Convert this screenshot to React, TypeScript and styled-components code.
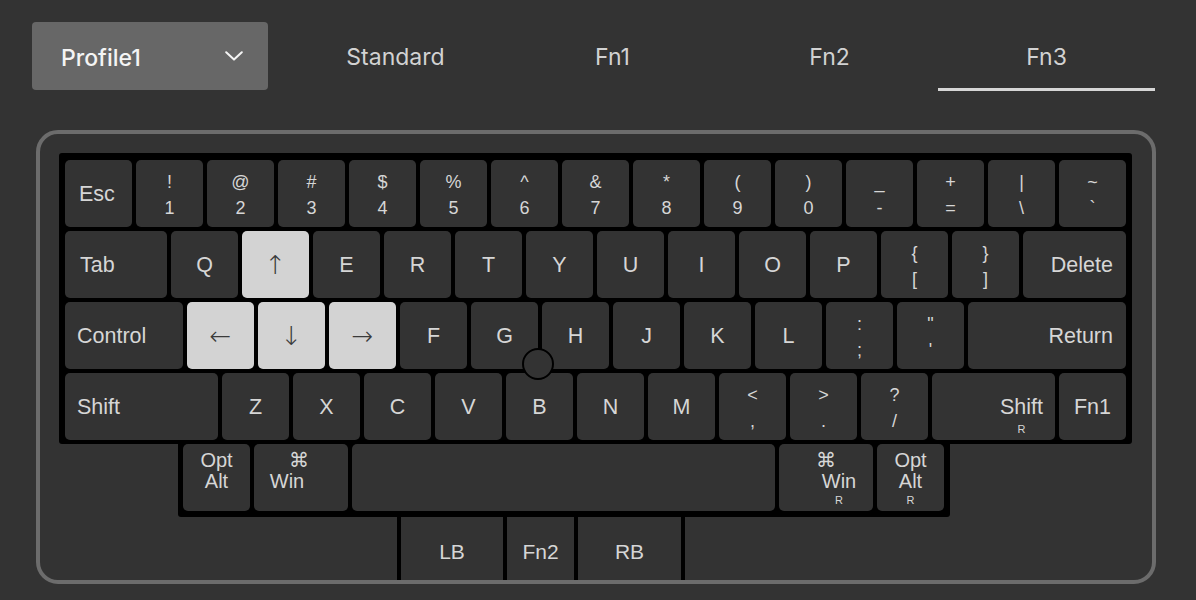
import React from 'react';
import styled, { createGlobalStyle } from 'styled-components';

type Line = { t: string; dx?: number; small?: boolean };

type KeyDef = {
  w?: number;
  label?: string;
  pair?: [string, string];
  lines?: Line[];
  sub?: string;
  align?: 'left' | 'center' | 'right';
  pad?: number;
  hl?: boolean;
};

const pair = (a: string, b: string): KeyDef => ({ pair: [a, b] });
const letters = (s: string): KeyDef[] => s.split('').map((c) => ({ label: c }));

const rows: KeyDef[][] = [
  [
    { label: 'Esc', align: 'left', pad: 14 },
    pair('!', '1'),
    pair('@', '2'),
    pair('#', '3'),
    pair('$', '4'),
    pair('%', '5'),
    pair('^', '6'),
    pair('&', '7'),
    pair('*', '8'),
    pair('(', '9'),
    pair(')', '0'),
    pair('_', '-'),
    pair('+', '='),
    pair('|', '\\'),
    pair('~', '`'),
  ],
  [
    { label: 'Tab', w: 102, align: 'left', pad: 15 },
    { label: 'Q' },
    { label: '↑', hl: true },
    ...letters('ERTYUIOP'),
    pair('{', '['),
    pair('}', ']'),
    { label: 'Delete', w: 103, align: 'right', pad: 13 },
  ],
  [
    { label: 'Control', w: 118, align: 'left', pad: 12 },
    { label: '←', hl: true },
    { label: '↓', hl: true },
    { label: '→', hl: true },
    ...letters('FGHJKL'),
    pair(':', ';'),
    pair('"', "'"),
    { label: 'Return', w: 158, align: 'right', pad: 13 },
  ],
  [
    { label: 'Shift', w: 153, align: 'left', pad: 12 },
    ...letters('ZXCVBNM'),
    pair('<', ','),
    pair('>', '.'),
    pair('?', '/'),
    { label: 'Shift', sub: 'R', w: 123, align: 'right', pad: 12 },
    { label: 'Fn1' },
  ],
];

const bottomRow: KeyDef[] = [
  { lines: [{ t: 'Opt' }, { t: 'Alt' }] },
  { w: 94, lines: [{ t: '⌘', dx: -2 }, { t: 'Win', dx: -14 }] },
  { w: 423 },
  { w: 94, lines: [{ t: '⌘' }, { t: 'Win', dx: 13 }, { t: 'R', dx: 13, small: true }] },
  { lines: [{ t: 'Opt' }, { t: 'Alt' }, { t: 'R', small: true }] },
];

const thumbKeys = [
  { label: 'LB', w: 102 },
  { label: 'Fn2', w: 67 },
  { label: 'RB', w: 103 },
];

const tabs = ['Standard', 'Fn1', 'Fn2', 'Fn3'];

const renderKey = (k: KeyDef, i: number) => (
  <Key
    key={i}
    $w={k.w ?? 67}
    $hl={!!k.hl}
    $align={k.align ?? 'center'}
    $pad={k.pad ?? 0}
    $top={!!k.lines}
  >
    {k.pair ? (
      <Pair>
        <span>{k.pair[0]}</span>
        <span>{k.pair[1]}</span>
      </Pair>
    ) : k.lines ? (
      <Stack>
        {k.lines.map((l, j) => (
          <StackLine key={j} $dx={l.dx ?? 0} $small={!!l.small}>
            {l.t}
          </StackLine>
        ))}
      </Stack>
    ) : k.sub ? (
      <SubWrap>
        <span>{k.label}</span>
        <Sub>{k.sub}</Sub>
      </SubWrap>
    ) : k.hl ? (
      <Arrow>{k.label}</Arrow>
    ) : (
      k.label
    )}
  </Key>
);

const App = () => {
  return (
    <Page>
      <GlobalStyle />
      <Header>
        <Dropdown>
          <span>Profile1</span>
          <svg width="18" height="10" viewBox="0 0 18 10" fill="none">
            <polyline
              points="1.2,1.2 9,8.6 16.8,1.2"
              stroke="#f4f4f4"
              strokeWidth="2"
              strokeLinecap="round"
              strokeLinejoin="round"
            />
          </svg>
        </Dropdown>
        <Tabs>
          {tabs.map((t) => (
            <Tab key={t} $active={t === 'Fn3'}>
              {t}
            </Tab>
          ))}
        </Tabs>
      </Header>

      <Frame>
        <Plate>
          <MainPlate>
            {rows.map((row, r) => (
              <KeyRow key={r}>{row.map(renderKey)}</KeyRow>
            ))}
          </MainPlate>
          <BottomPlate>
            <KeyRow>{bottomRow.map(renderKey)}</KeyRow>
          </BottomPlate>
          <ThumbRow>
            {thumbKeys.map((k) => (
              <ThumbKey key={k.label} $w={k.w}>
                {k.label}
              </ThumbKey>
            ))}
          </ThumbRow>
          <TrackPoint />
        </Plate>
      </Frame>
    </Page>
  );
};

const GlobalStyle = createGlobalStyle`
  html, body {
    margin: 0;
    padding: 0;
    background: #333333;
  }
  body {
    width: 1196px;
    height: 600px;
    overflow: hidden;
    font-family: Inter, "Liberation Sans", sans-serif;
  }
`;

const Page = styled.div`
  padding: 22px 0 0 32px;
`;

const Header = styled.div`
  display: flex;
  align-items: flex-start;
`;

const Dropdown = styled.div`
  box-sizing: border-box;
  width: 236px;
  height: 68px;
  padding: 3px 25px 0 29px;
  background: #676767;
  border-radius: 4px;
  display: flex;
  align-items: center;
  justify-content: space-between;
  color: #f4f4f4;
  font-size: 23px;
  font-weight: 500;

  svg {
    margin-top: -3px;
  }
`;

const Tabs = styled.div`
  display: flex;
  margin-left: 19px;
`;

const Tab = styled.div<{ $active: boolean }>`
  box-sizing: border-box;
  width: 217px;
  height: 69px;
  padding-top: 3px;
  display: flex;
  align-items: center;
  justify-content: center;
  border-bottom: 3px solid ${({ $active }) => ($active ? '#d6d6d6' : 'transparent')};
  color: #d2d2d2;
  font-size: 23px;
`;

const Frame = styled.div`
  box-sizing: border-box;
  width: 1120px;
  margin: 39px 0 0 4px;
  padding: 19px 19px 0;
  border: 4px solid #6c6c6c;
  border-radius: 22px;
`;

const Plate = styled.div`
  position: relative;
  display: flex;
  flex-direction: column;
  align-items: flex-start;
`;

const MainPlate = styled.div`
  display: flex;
  flex-direction: column;
  gap: 4px;
  padding: 7px 6px 4px;
  background: #000;
  border-radius: 3px;
`;

const BottomPlate = styled.div`
  margin-left: 119px;
  padding: 0 6px 6px 5px;
  background: #000;
  border-radius: 0 0 3px 3px;
`;

const KeyRow = styled.div`
  display: flex;
  gap: 4px;
`;

const Key = styled.div<{
  $w: number;
  $hl: boolean;
  $align: 'left' | 'center' | 'right';
  $pad: number;
  $top: boolean;
}>`
  box-sizing: border-box;
  flex: none;
  width: ${({ $w }) => $w}px;
  height: 67px;
  border-radius: 5px;
  background: ${({ $hl }) => ($hl ? '#d3d3d3' : '#333333')};
  color: ${({ $hl }) => ($hl ? '#3a3a3a' : '#d6d6d6')};
  display: flex;
  align-items: ${({ $top }) => ($top ? 'flex-start' : 'center')};
  justify-content: ${({ $align }) =>
    $align === 'left' ? 'flex-start' : $align === 'right' ? 'flex-end' : 'center'};
  padding: ${({ $top, $pad }) => ($top ? '6px 0 0' : `0 ${$pad}px`)};
  font-family: "Liberation Sans", "DejaVu Sans", sans-serif;
  font-size: 21.5px;
  line-height: 22px;
`;

const Arrow = styled.span`
  font-family: "DejaVu Sans", sans-serif;
  font-size: 26px;
  line-height: 26px;
  font-weight: 300;
`;

const Pair = styled.div`
  display: flex;
  flex-direction: column;
  align-items: center;
  padding-top: 2px;
  font-size: 18px;
  line-height: 26px;
`;

const Stack = styled.div`
  display: flex;
  flex-direction: column;
  align-items: center;
`;

const StackLine = styled.span<{ $dx: number; $small: boolean }>`
  transform: translateX(${({ $dx }) => $dx}px);
  font-size: ${({ $small }) => ($small ? '11px' : '20px')};
  line-height: ${({ $small }) => ($small ? '16px' : '21px')};
`;

const SubWrap = styled.div`
  display: flex;
  flex-direction: column;
  align-items: center;
  gap: 4px;
  padding-top: 18px;
`;

const Sub = styled.span`
  font-size: 11px;
  line-height: 14px;
`;

const ThumbRow = styled.div`
  margin-left: 338px;
  height: 63px;
  display: flex;
  gap: 4px;
  padding: 0 4px;
  background: #000;
`;

const ThumbKey = styled.div<{ $w: number }>`
  box-sizing: border-box;
  width: ${({ $w }) => $w}px;
  padding-top: 6px;
  background: #333333;
  display: flex;
  align-items: center;
  justify-content: center;
  color: #d6d6d6;
  font-family: "Liberation Sans", sans-serif;
  font-size: 21px;
`;

const TrackPoint = styled.div`
  position: absolute;
  left: 463px;
  top: 195px;
  box-sizing: border-box;
  width: 32px;
  height: 32px;
  border-radius: 50%;
  border: 2px solid #000;
  background: #333333;
`;

export default App;
